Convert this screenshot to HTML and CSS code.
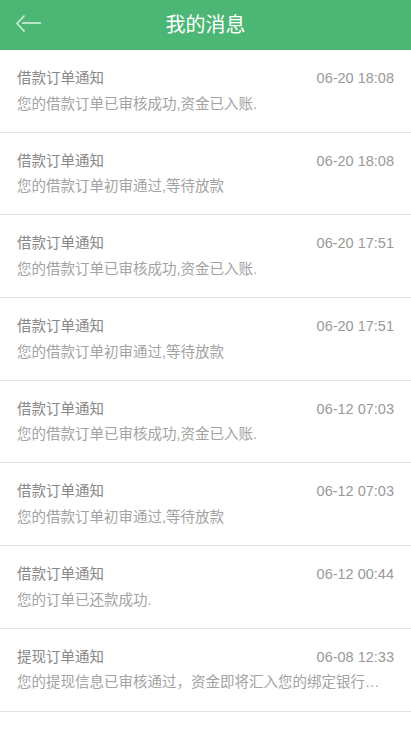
FILE: index.html
```html
<!DOCTYPE html>
<html lang="zh-CN">
<head>
  <meta charset="UTF-8" />
  <meta name="viewport" content="width=device-width, initial-scale=1.0"/>
  <title>我的消息</title>
  <link rel="stylesheet" href="styles.css">
</head>
<body>
  <header class="topbar">
    <a class="back" href="#">
      <svg width="26" height="20" viewBox="0 0 26 20">
        <path d="M8.5 1.5 L1 9.5 L8.5 17.5" fill="none" stroke="#d6f0dd" stroke-width="1.6"/>
        <path d="M6 9 H25" fill="none" stroke="#d6f0dd" stroke-width="1.6"/>
      </svg>
    </a>
    <h1>我的消息</h1>
  </header>

  <ul class="msg-list">
    <li class="msg">
      <div class="msg-head"><span class="msg-title">借款订单通知</span><span class="msg-time">06-20 18:08</span></div>
      <p class="msg-text">您的借款订单已审核成功,资金已入账.</p>
    </li>
    <li class="msg">
      <div class="msg-head"><span class="msg-title">借款订单通知</span><span class="msg-time">06-20 18:08</span></div>
      <p class="msg-text">您的借款订单初审通过,等待放款</p>
    </li>
    <li class="msg">
      <div class="msg-head"><span class="msg-title">借款订单通知</span><span class="msg-time">06-20 17:51</span></div>
      <p class="msg-text">您的借款订单已审核成功,资金已入账.</p>
    </li>
    <li class="msg">
      <div class="msg-head"><span class="msg-title">借款订单通知</span><span class="msg-time">06-20 17:51</span></div>
      <p class="msg-text">您的借款订单初审通过,等待放款</p>
    </li>
    <li class="msg">
      <div class="msg-head"><span class="msg-title">借款订单通知</span><span class="msg-time">06-12 07:03</span></div>
      <p class="msg-text">您的借款订单已审核成功,资金已入账.</p>
    </li>
    <li class="msg">
      <div class="msg-head"><span class="msg-title">借款订单通知</span><span class="msg-time">06-12 07:03</span></div>
      <p class="msg-text">您的借款订单初审通过,等待放款</p>
    </li>
    <li class="msg">
      <div class="msg-head"><span class="msg-title">借款订单通知</span><span class="msg-time">06-12 00:44</span></div>
      <p class="msg-text">您的订单已还款成功.</p>
    </li>
    <li class="msg">
      <div class="msg-head"><span class="msg-title">提现订单通知</span><span class="msg-time">06-08 12:33</span></div>
      <p class="msg-text">您的提现信息已审核通过，资金即将汇入您的绑定银行卡，请注意查收。</p>
    </li>
  </ul>
</body>
</html>
```

FILE: styles.css
```css
* {
  box-sizing: border-box;
}
body {
  margin: 0;
  background: #fff;
  font-family: "Liberation Sans", "Noto Sans CJK SC", sans-serif;
}
.topbar {
  height: 50px;
  background-color: #4cb674;
  display: flex;
  align-items: center;
  justify-content: center;
  position: relative;
}
.topbar h1 {
  margin: 0;
  color: #fff;
  font-size: 20px;
  font-weight: normal;
  line-height: 50px;
}
.back {
  position: absolute;
  left: 16px;
  top: 14px;
  display: block;
  width: 26px;
  height: 20px;
}
.back svg {
  display: block;
}
.msg-list {
  list-style: none;
  margin: 0;
  padding: 0;
}
.msg {
  height: 82.7px;
  padding: 18px 17px 0;
  border-bottom: 1px solid #e3e3e3;
}
.msg-head {
  display: flex;
  justify-content: space-between;
  line-height: 20px;
}
.msg-title {
  font-size: 14.5px;
  color: #888;
}
.msg-time {
  font-size: 14.5px;
  color: #999;
}
.msg-text {
  margin: 5.5px 0 0;
  font-size: 14.5px;
  line-height: 20px;
  color: #a3a3a3;
  white-space: nowrap;
  overflow: hidden;
  text-overflow: ellipsis;
  padding-right: 12px;
}
```
